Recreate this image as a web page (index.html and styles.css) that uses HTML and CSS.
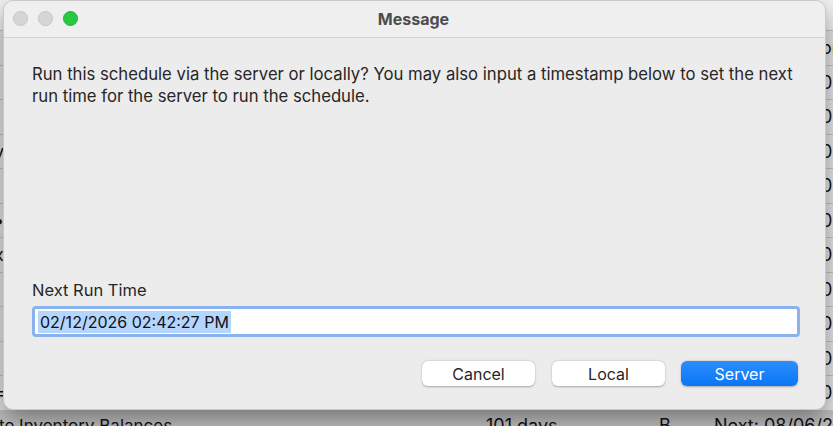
FILE: index.html
```html
<!DOCTYPE html>
<html lang="en">
<head>
    <meta charset="UTF-8">
    <title>Message</title>
    <link rel="stylesheet" href="styles.css">
</head>
<body>
    <div class="backdrop">
        <div class="table">
            <div class="row head"></div>
            <div class="row"><span class="c-name"></span><span class="c-end">or</span></div>
            <div class="row"><span class="c-name"></span><span class="c-end">0</span></div>
            <div class="row"><span class="c-name"></span><span class="c-end">0</span></div>
            <div class="row"><span class="c-name">v</span><span class="c-end">0</span></div>
            <div class="row"><span class="c-name">t</span><span class="c-end">0</span></div>
            <div class="row"><span class="c-name">•</span><span class="c-end">0</span></div>
            <div class="row"><span class="c-name">x</span><span class="c-end">0</span></div>
            <div class="row"><span class="c-name">)</span><span class="c-end">0</span></div>
            <div class="row"><span class="c-name"></span><span class="c-end">0</span></div>
            <div class="row"><span class="c-name">t</span><span class="c-end">0</span></div>
            <div class="row"><span class="c-name">=</span><span class="c-end">0</span></div>
            <div class="row last">
                <span class="c-title">te Inventory Balances</span>
                <span class="c-int">101 days</span>
                <span class="c-st">B</span>
                <span class="c-next">Next: 08/06/20</span>
            </div>
        </div>

        <div class="dialog">
            <div class="titlebar">
                <div class="lights">
                    <span class="light"></span>
                    <span class="light"></span>
                    <span class="light green"></span>
                </div>
                <div class="title">Message</div>
            </div>

            <div class="content">
                <p class="message">Run this schedule via the server or locally? You may also input a timestamp below to set the next run time for the server to run the schedule.</p>

                <label class="field-label">Next Run Time</label>
                <div class="field">
                    <span class="selected">02/12/2026 02:42:27 PM</span>
                </div>

                <div class="buttons">
                    <button class="btn">Cancel</button>
                    <button class="btn">Local</button>
                    <button class="btn primary">Server</button>
                </div>
            </div>
        </div>
    </div>
</body>
</html>
```

FILE: styles.css
```css
body {
    margin: 0;
    font-family: Inter, "Liberation Sans", sans-serif;
    background: #e4e4e4;
    overflow: hidden;
}

.backdrop {
    position: relative;
    width: 833px;
    height: 426px;
    overflow: hidden;
}

/* the schedule table behind the sheet */
.table {
    font-size: 18px;
    color: #111;
}

.row {
    display: flex;
    align-items: center;
    height: 33.5px;
    border-top: 1px solid #c4c4c4;
    background: #e6e6e6;
    white-space: nowrap;
}

.row > span {
    flex-shrink: 0;
}

.row.head {
    height: 30px;
    border-top: none;
    background: #f2f2f2;
}

.row.last {
    height: 30px;
    background: #c2c2c2;
}

.c-name {
    width: 826px;
    margin-left: -6px;
}

.c-title {
    width: 487px;
    margin-left: -1px;
    font-size: 17px;
}

.c-int {
    width: 173px;
}

.c-st {
    width: 55px;
}

.c-end {
    padding-left: 1px;
}

/* dialog sheet */
.dialog {
    position: absolute;
    left: 3px;
    top: 0;
    width: 823px;
    height: 410px;
    background: #ececec;
    border: 1px solid #c9c9c9;
    border-radius: 10px;
    box-sizing: border-box;
    box-shadow: 0 10px 24px rgba(0, 0, 0, 0.4);
    display: flex;
    flex-direction: column;
}

.titlebar {
    position: relative;
    height: 36px;
    border-bottom: 1px solid #d3d3d3;
    display: flex;
    align-items: center;
    justify-content: center;
    background: #efefef;
    border-radius: 10px 10px 0 0;
}

.lights {
    position: absolute;
    left: 9px;
    top: 10px;
    display: flex;
    gap: 10px;
}

.light {
    width: 13px;
    height: 13px;
    border-radius: 50%;
    background: #d6d6d6;
    border: 1px solid #c5c5c5;
}

.light.green {
    background: #2ac840;
    border-color: #24b23a;
}

.title {
    font-size: 16px;
    font-weight: 700;
    color: #4d4d4d;
    margin-left: -2px;
    margin-top: -1px;
}

.content {
    flex: 1;
    display: flex;
    flex-direction: column;
    padding: 25px 25px 23px 28px;
}

.message {
    margin: 0;
    font-size: 16.7px;
    line-height: 22px;
    color: #262626;
    flex: 1;
}

.field-label {
    font-size: 16.5px;
    color: #262626;
    margin-bottom: 6px;
}

.field {
    height: 25px;
    border: 3px solid #8ab2ee;
    border-radius: 4px;
    background: #fff;
    display: flex;
    align-items: center;
    padding-left: 3px;
    font-size: 16px;
    color: #111;
}

.selected {
    background: #b4d5fe;
    padding: 1px 2px 0 2px;
    line-height: 21px;
}

.buttons {
    display: flex;
    justify-content: flex-end;
    gap: 17px;
    margin-top: 24px;
    padding-right: 2px;
}

.btn {
    width: 113px;
    height: 25px;
    border: none;
    border-radius: 6px;
    background: #fff;
    box-shadow: 0 0.5px 2px rgba(0, 0, 0, 0.3);
    font-family: inherit;
    font-size: 16px;
    color: #262626;
    padding: 0;
}

.btn.primary {
    width: 117px;
    margin-left: -1px;
    background: linear-gradient(#2b8cfd, #0c76f6);
    color: #fff;
}
```
